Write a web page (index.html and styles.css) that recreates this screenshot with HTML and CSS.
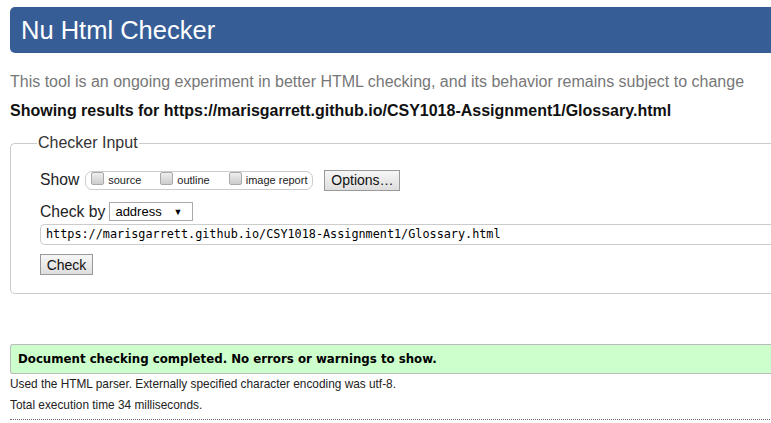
FILE: index.html
```html
<!DOCTYPE html>
<html>
<head>
<meta charset="utf-8">
<link rel="stylesheet" href="styles.css">
</head>
<body>
<h1 class="title">Nu Html Checker</h1>
<p class="intro">This tool is an ongoing experiment in better HTML checking, and its behavior remains subject to change</p>
<p class="results">Showing results for https://marisgarrett.github.io/CSY1018-Assignment1/Glossary.html</p>
<fieldset class="checker">
  <legend class="legend">Checker Input</legend>
  <div class="row show-row">
    <span class="label">Show</span>
    <span class="opts">
      <label class="opt"><span class="box"></span>source</label>
      <label class="opt"><span class="box"></span>outline</label>
      <label class="opt"><span class="box"></span>image report</label>
    </span>
    <span class="btn options">Options…</span>
  </div>
  <div class="row by-row">
    <span class="label">Check by</span>
    <span class="select">address<span class="arrow">▼</span></span>
  </div>
  <div class="url">https://marisgarrett.github.io/CSY1018-Assignment1/Glossary.html</div>
  <div class="row check-row"><span class="btn check">Check</span></div>
</fieldset>
<div class="success">Document checking completed. No errors or warnings to show.</div>
<p class="meta">Used the HTML parser. Externally specified character encoding was utf-8.</p>
<p class="meta">Total execution time 34 milliseconds.</p>
<div class="rule"></div>
</body>
</html>
```
FILE: styles.css
```css
html, body { margin: 0; padding: 0; background: #fff; overflow: hidden; }
body {
  width: 800px;
  padding: 7px 0 0 10px;
  font-family: "Liberation Sans", Arial, sans-serif;
  color: #000;
}
.title {
  margin: 0;
  height: 46px;
  box-sizing: border-box;
  background: #365d96;
  color: #fff;
  border-radius: 5px 0 0 5px;
  font-weight: normal;
  font-size: 25.5px;
  line-height: 46px;
  padding-left: 11px;
}
.intro {
  margin: 19px 0 0 0;
  font-size: 16px;
  line-height: 20px;
  color: #777;
}
.results {
  margin: 9px 0 0 0;
  font-size: 16px;
  line-height: 20px;
  font-weight: bold;
  color: #111;
}
.checker {
  margin: 13px 0 0 0;
  border: 1px solid #ccc;
  border-right: none;
  border-radius: 5px 0 0 5px;
  padding: 4px 0 17px 29px;
  height: 160px;
  box-sizing: border-box;
}
.legend {
  font-size: 16px;
  color: #333;
  padding: 0 1px;
  margin-left: -3px;
}
.row { display: flex; align-items: center; }
.show-row { margin-top: 13px; height: 22px; }
.label { font-size: 15.7px; color: #222; margin-right: 3px; }
.opts {
  display: flex;
  align-items: center;
  border: 1px solid #ccc;
  border-radius: 7px;
  height: 17px;
  padding: 0 5px;
  margin-left: 3px;
}
.opt {
  display: flex;
  align-items: center;
  font-size: 11px;
  color: #222;
  margin-right: 19px;
}
.opt:last-child { margin-right: 0; }
.box {
  width: 11px;
  height: 11px;
  border: 1px solid #aaa;
  border-radius: 2px;
  background: linear-gradient(#eee, #ccc);
  margin-right: 4px;
  position: relative;
  top: -2px;
}
.btn {
  display: inline-flex;
  align-items: center;
  justify-content: center;
  border: 1px solid #999;
  background: linear-gradient(#f6f6f6, #dedede);
  font-size: 14px;
  color: #111;
  height: 21px;
  box-sizing: border-box;
}
.options { width: 76px; margin-left: 11px; }
.by-row { margin-top: 11px; height: 19px; }
.select {
  display: inline-flex;
  align-items: center;
  justify-content: space-between;
  width: 84px;
  height: 19px;
  box-sizing: border-box;
  border: 1px solid #aaa;
  font-size: 13px;
  padding: 0 10px 0 5px;
  margin-left: 1px;
}
.arrow { font-size: 9px; }
.url {
  margin-top: 3px;
  height: 21px;
  box-sizing: border-box;
  border: 1px solid #ccc;
  border-right: none;
  border-radius: 5px 0 0 5px;
  font-family: "DejaVu Sans Mono", monospace;
  font-size: 11.8px;
  line-height: 19px;
  padding-left: 5px;
}
.check-row { margin-top: 9px; }
.check { width: 53px; font-size: 14px; }
.success {
  margin-top: 50px;
  background: #ccffcc;
  border: 1px solid #bbb;
  border-right: none;
  border-radius: 3px 0 0 3px;
  height: 30px;
  box-sizing: border-box;
  font-family: "DejaVu Sans Condensed", "DejaVu Sans", sans-serif;
  font-weight: bold;
  font-size: 13.1px;
  line-height: 28px;
  padding-left: 7px;
}
.meta {
  margin: 0;
  font-size: 11.85px;
  line-height: 21px;
  color: #222;
}
.rule {
  margin-top: 3px;
  border-top: 1px dotted #666;
}
```
